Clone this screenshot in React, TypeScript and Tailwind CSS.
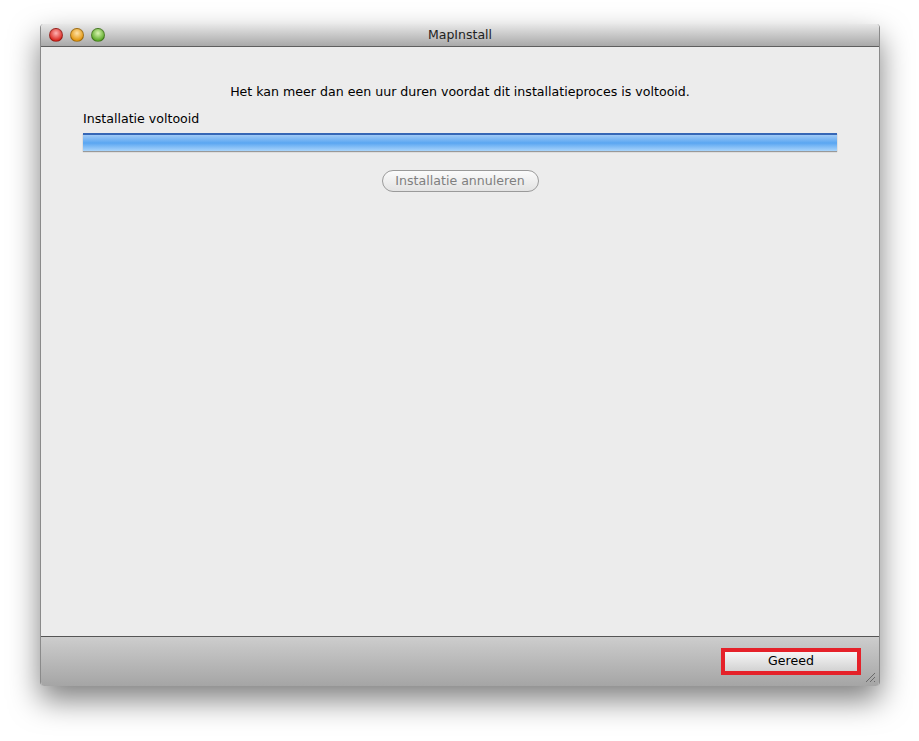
import React from "react";

const font = { fontFamily: '"DejaVu Sans", "Lucida Grande", sans-serif' };

const Light = ({ from, to }: { from: string; to: string }) => (
  <div
    className="w-[14px] h-[14px] rounded-full border border-black/30"
    style={{ background: `radial-gradient(circle at 50% 35%, ${from} 0%, ${to} 75%)` }}
  />
);

export default function App() {
  return (
    <div className="w-[919px] h-[741px] bg-white pt-[24px] pl-[40px]" style={font}>
      <div className="w-[840px] h-[662px] flex flex-col rounded-[4px] overflow-hidden shadow-[0_14px_30px_rgba(0,0,0,0.5)] border-x border-[#8a8a8a]">
        {/* title bar */}
        <div className="h-[23px] relative flex items-center bg-gradient-to-b from-[#e8e8e8] to-[#a9a9a9] border-b border-[#5e5e5e]">
          <div className="flex gap-[7px] pl-[8px]">
            <Light from="#ffb3b3" to="#d8241c" />
            <Light from="#ffe2a6" to="#e2950c" />
            <Light from="#d9f5b0" to="#5aa826" />
          </div>
          <div className="absolute inset-0 flex items-center justify-center text-[12.5px] text-[#222]">MapInstall</div>
        </div>

        {/* content */}
        <div className="flex-1 bg-[#ececec] flex flex-col px-[42px] pt-[36px]">
          <div className="text-center text-[12.6px] text-black leading-[17px]">
            Het kan meer dan een uur duren voordat dit installatieproces is voltooid.
          </div>
          <div className="mt-[10px] text-[12.6px] text-black leading-[17px]">Installatie voltooid</div>
          <div className="mt-[6px] h-[18px] border-t-2 border-[#3667b6] bg-gradient-to-b from-[#9fcaf6] via-[#5aa6f1] to-[#a8d4fb] shadow-[0_1px_1px_rgba(0,0,0,0.35)]" />
          <div className="mt-[19px] flex justify-center">
            <div className="w-[157px] h-[22px] rounded-full border border-[#9a9a9a] bg-gradient-to-b from-[#fbfbfb] to-[#e3e3e3] flex items-center justify-center text-[12.6px] text-[#7f7f7f]">
              Installatie annuleren
            </div>
          </div>
        </div>

        {/* bottom bar */}
        <div className="h-[50px] border-t border-[#555] bg-gradient-to-b from-[#cdcdcd] to-[#a5a5a5] relative flex justify-end pr-[18px] pt-[11px]">
          <div className="w-[140px] h-[27px] border-[4px] border-[#e52129] flex">
            <div className="flex-1 bg-gradient-to-b from-[#f6f6f6] to-[#d2d2d2] flex items-center justify-center text-[12.6px] text-black">
              Gereed
            </div>
          </div>
          <svg className="absolute right-[3px] bottom-[3px]" width="11" height="11" viewBox="0 0 11 11">
            <path d="M1 10 L10 1 M5 10 L10 5 M9 10 L10 9" stroke="#6a6a6a" strokeWidth="1" />
          </svg>
        </div>
      </div>
    </div>
  );
}
